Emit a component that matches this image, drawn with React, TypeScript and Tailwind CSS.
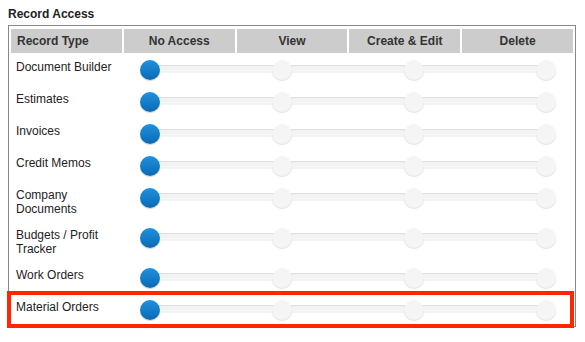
const rows: string[][] = [
  ["Document Builder"],
  ["Estimates"],
  ["Invoices"],
  ["Credit Memos"],
  ["Company", "Documents"],
  ["Budgets / Profit", "Tracker"],
  ["Work Orders"],
  ["Material Orders"],
];

const columns = ["No Access", "View", "Create & Edit", "Delete"];

function AccessSlider() {
  return (
    <div className="col-span-4 relative h-[32px] pt-[6px] px-[16px]">
      {/* track */}
      <div className="absolute left-[26px] right-[27px] top-[11px] h-[8px] bg-[#f4f4f4] shadow-[inset_0_1px_1px_rgba(0,0,0,0.1)]" />
      <div className="relative flex justify-between pr-[1px]">
        <div className="w-[20px] h-[20px] rounded-full bg-gradient-to-b from-[#1f92dd] to-[#0a6ab5] shadow-[0_1px_1px_rgba(0,0,0,0.2)]" />
        <div className="w-[20px] h-[20px] rounded-full bg-[#f5f5f5] shadow-[0_1px_1px_rgba(0,0,0,0.12)]" />
        <div className="w-[20px] h-[20px] rounded-full bg-[#f5f5f5] shadow-[0_1px_1px_rgba(0,0,0,0.12)]" />
        <div className="w-[20px] h-[20px] rounded-full bg-[#f5f5f5] shadow-[0_1px_1px_rgba(0,0,0,0.12)]" />
      </div>
    </div>
  );
}

export default function App() {
  return (
    <div className="relative w-[585px] h-[342px] bg-white text-[#222] font-['Liberation_Sans',Arial,sans-serif]">
      <h2 className="pt-[7px] pl-[8px] text-[12px] leading-[14px] font-bold">Record Access</h2>

      <div className="ml-[8px] mt-[4px] w-[568px] border border-[#888] pt-[3px] px-[2px]">
        {/* header */}
        <div className="grid grid-cols-5 gap-x-[2px] h-[24px] text-[12px] font-bold text-[#333]">
          <div className="bg-[#cccccc] flex items-center px-[6px]">Record Type</div>
          {columns.map((c) => (
            <div key={c} className="bg-[#cccccc] flex items-center justify-center">
              {c}
            </div>
          ))}
        </div>

        {/* body */}
        <div className="pt-[1px]">
          {rows.map((lines) => (
            <div key={lines.join(" ")} className="grid grid-cols-5 gap-x-[2px] items-start">
              <div className="px-[5px] py-[6px] text-[12px] leading-[14px] text-[#222]">
                {lines.map((l) => (
                  <div key={l}>{l}</div>
                ))}
              </div>
              <AccessSlider />
            </div>
          ))}
        </div>
      </div>

      {/* highlight annotation */}
      <div className="absolute left-[7px] top-[291px] w-[567px] h-[37px] border-[4px] border-[#ff2600]" />
    </div>
  );
}
